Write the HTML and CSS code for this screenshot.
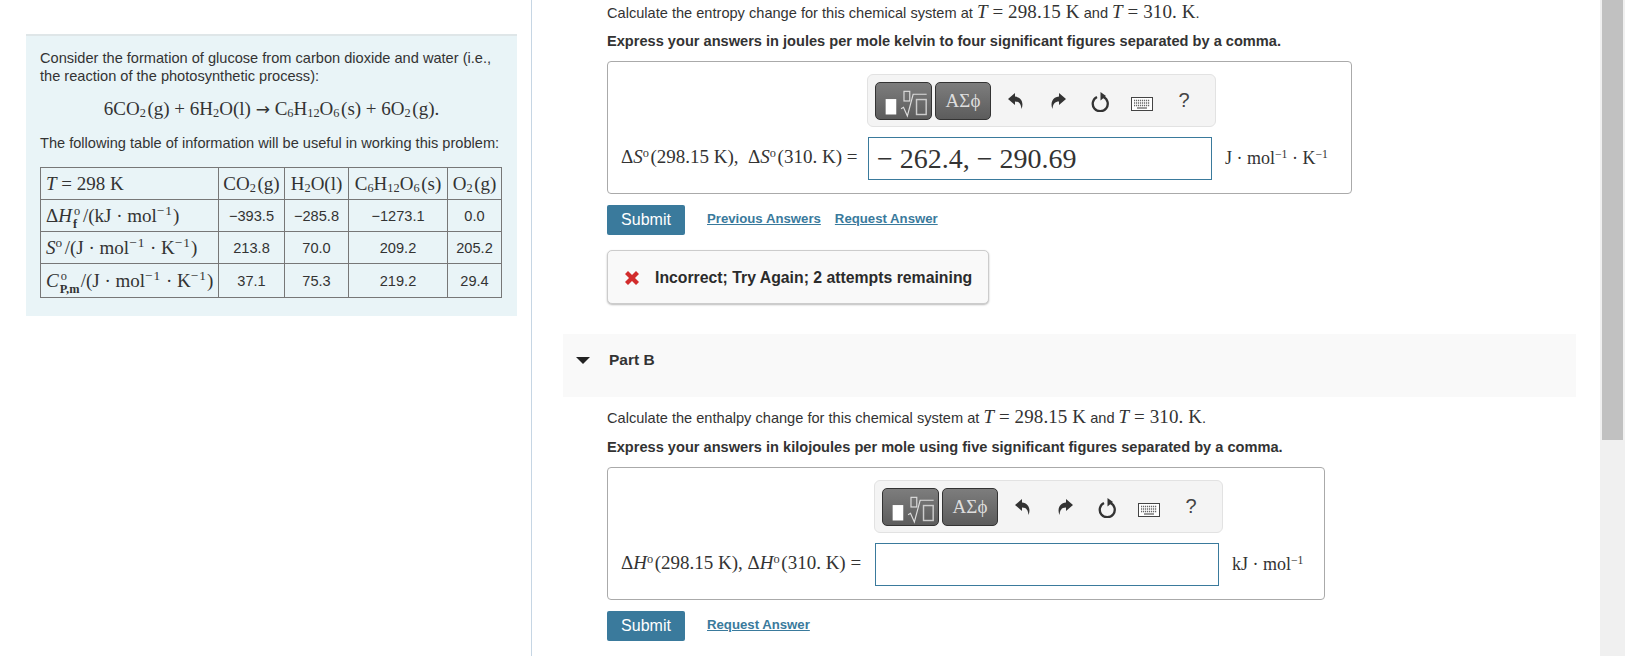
FILE: index.html
```html
<!DOCTYPE html>
<html lang="en">
<head>
  <meta charset="UTF-8">
  <title>Part B - Thermochemistry</title>
  <link rel="stylesheet" href="styles.css">
</head>
<body>

<svg class="defs" width="0" height="0">
  <symbol id="ic-templates" viewBox="0 0 57 37">
    <rect x="10" y="17" width="11" height="16" fill="#fff"/>
    <rect x="29" y="9" width="6" height="10" fill="none" stroke="#ddd" stroke-width="1.2"/>
    <path d="M26 27l2.500-1.500 4 9 6-22.500h14" fill="none" stroke="#ddd" stroke-width="1.200"/>
    <rect x="42" y="17.500" width="10" height="15.500" fill="none" stroke="#ccc" stroke-width="1.500"/>
  </symbol>
  <symbol id="ic-undo" viewBox="0 0 18 18">
    <path d="M8 1L1 7l7 6V9.500c4 0 6 2 6.500 7.500 2.500-6 0-12-6.500-12.500z" fill="#333"/>
  </symbol>
  <symbol id="ic-redo" viewBox="0 0 18 18">
    <path d="M10 1l7 6-7 6V9.500c-4 0-6 2-6.500 7.500-2.500-6 0-12 6.500-12.500z" fill="#333"/>
  </symbol>
  <symbol id="ic-reset" viewBox="0 0 18 20">
    <path d="M6 5a7.500 7.500 0 1 0 6.500 0" fill="none" stroke="#333" stroke-width="2.300"/>
    <path d="M9.500 0v8.500l5.500-4.500z" fill="#333"/>
  </symbol>
  <symbol id="ic-keyboard" viewBox="0 0 22 14">
    <rect x=".5" y=".5" width="21" height="13" fill="#fff" stroke="#444"/>
    <path d="M3 3.500h16M3 6h16M3 8.500h16" stroke="#666" stroke-width="1.300" stroke-dasharray="1.200 .8"/>
    <path d="M6 11h10" stroke="#666" stroke-width="1.300"/>
  </symbol>
  <symbol id="ic-cross" viewBox="0 0 16 16">
    <path d="M1 4l3-3 4 4 4-4 3 3-4 4 4 4-3 3-4-4-4 4-3-3 4-4z" fill="#d22c2c"/>
  </symbol>
</svg>

<div class="page">
  <aside class="side">
    <div class="info">
      <p>Consider the formation of glucose from carbon dioxide and water (i.e., the reaction of the photosynthetic process):</p>
      <div class="math equation">6CO<sub>2</sub>&#8202;(g) + 6H<sub>2</sub>O(l) <span class="arrow">→</span> C<sub>6</sub>H<sub>12</sub>O<sub>6</sub>&#8202;(s) + 6O<sub>2</sub>&#8202;(g).</div>
      <p>The following table of information will be useful in working this problem:</p>
      <table class="data">
        <tr class="row-head">
          <th class="col-label math"><i>T</i> = 298 K</th>
          <th class="col-a math">CO<sub>2</sub>&#8202;(g)</th>
          <th class="col-b math">H<sub>2</sub>O(l)</th>
          <th class="col-c math">C<sub>6</sub>H<sub>12</sub>O<sub>6</sub>&#8202;(s)</th>
          <th class="col-d math">O<sub>2</sub>&#8202;(g)</th>
        </tr>
        <tr>
          <th class="math">Δ<i>H</i><span class="stack"><sup>o</sup><sub>f</sub></span>/(kJ · mol<sup>−1</sup>)</th>
          <td>−393.5</td><td>−285.8</td><td>−1273.1</td><td>0.0</td>
        </tr>
        <tr>
          <th class="math"><i>S</i><sup>o</sup>&#8202;/(J · mol<sup>−1</sup> · K<sup>−1</sup>)</th>
          <td>213.8</td><td>70.0</td><td>209.2</td><td>205.2</td>
        </tr>
        <tr class="row-last">
          <th class="math"><i>C</i><span class="stack stack-wide"><sup>o</sup><sub>P,m</sub></span>/(J · mol<sup>−1</sup> · K<sup>−1</sup>)</th>
          <td>37.1</td><td>75.3</td><td>219.2</td><td>29.4</td>
        </tr>
      </table>
    </div>
  </aside>

  <main class="main">
    <div class="part">
      <p class="question">Calculate the entropy change for this chemical system at <span class="math"><i>T</i> = 298.15 K</span> and <span class="math"><i>T</i> = 310. K</span>.</p>
      <p class="instruction">Express your answers in joules per mole kelvin to four significant figures separated by a comma.</p>

      <div class="answer answer-a">
        <div class="toolbar">
          <button class="tool-btn tool-templates"><svg width="57" height="37"><use href="#ic-templates"/></svg></button>
          <button class="tool-btn tool-symbols">ΑΣϕ</button>
          <span class="tool-icon"><svg width="18" height="18"><use href="#ic-undo"/></svg></span>
          <span class="tool-icon"><svg width="18" height="18"><use href="#ic-redo"/></svg></span>
          <span class="tool-icon tool-reset"><svg width="18" height="20"><use href="#ic-reset"/></svg></span>
          <span class="tool-icon tool-keyboard"><svg width="22" height="14"><use href="#ic-keyboard"/></svg></span>
          <span class="tool-icon tool-help">?</span>
        </div>
        <label class="math answer-label">Δ<i>S</i><sup>o</sup>&#8202;(298.15 K), &nbsp;Δ<i>S</i><sup>o</sup>&#8202;(310. K) =</label>
        <input class="math answer-input" type="text" value="− 262.4, − 290.69">
        <span class="math units">J · mol<sup>−1</sup> · K<sup>−1</sup></span>
      </div>

      <div class="actions">
        <button class="submit">Submit</button>
        <a class="link" href="#">Previous Answers</a>
        <a class="link" href="#">Request Answer</a>
      </div>

      <div class="feedback">
        <svg width="16" height="16"><use href="#ic-cross"/></svg>
        <span>Incorrect; Try Again; 2 attempts remaining</span>
      </div>
    </div>

    <div class="part-head">
      <span class="caret"></span>
      <span>Part B</span>
    </div>

    <div class="part">
      <p class="question question-b">Calculate the enthalpy change for this chemical system at <span class="math"><i>T</i> = 298.15 K</span> and <span class="math"><i>T</i> = 310. K</span>.</p>
      <p class="instruction">Express your answers in kilojoules per mole using five significant figures separated by a comma.</p>

      <div class="answer answer-b">
        <div class="toolbar">
          <button class="tool-btn tool-templates"><svg width="57" height="37"><use href="#ic-templates"/></svg></button>
          <button class="tool-btn tool-symbols">ΑΣϕ</button>
          <span class="tool-icon"><svg width="18" height="18"><use href="#ic-undo"/></svg></span>
          <span class="tool-icon"><svg width="18" height="18"><use href="#ic-redo"/></svg></span>
          <span class="tool-icon tool-reset"><svg width="18" height="20"><use href="#ic-reset"/></svg></span>
          <span class="tool-icon tool-keyboard"><svg width="22" height="14"><use href="#ic-keyboard"/></svg></span>
          <span class="tool-icon tool-help">?</span>
        </div>
        <label class="math answer-label">Δ<i>H</i><sup>o</sup>&#8202;(298.15 K), Δ<i>H</i><sup>o</sup>&#8202;(310. K) =</label>
        <input class="math answer-input" type="text">
        <span class="math units">kJ · mol<sup>−1</sup></span>
      </div>

      <div class="actions">
        <button class="submit">Submit</button>
        <a class="link" href="#">Request Answer</a>
      </div>
    </div>
  </main>

  <div class="scrollbar"><div class="scrollbar-thumb"></div></div>
</div>

</body>
</html>
```

FILE: styles.css
```css
* {
  box-sizing: border-box;
}

html, body {
  margin: 0;
  height: 656px;
  overflow: hidden;
}

body {
  font-family: "Liberation Sans", Arial, sans-serif;
  font-size: 14px;
  color: #333;
  background: #fff;
}

.defs {
  position: absolute;
}

.page {
  display: flex;
  height: 656px;
}

.math {
  font-family: "Liberation Serif", "Times New Roman", serif;
}

sub, sup {
  font-size: 0.65em;
  line-height: 0;
}

sub {
  vertical-align: -0.2em;
}

sup {
  vertical-align: 0.5em;
}

/* left column */
.side {
  width: 532px;
  flex: none;
  padding: 34px 14px 0 26px;
  border-right: 1px solid #c6d6e4;
}

.info {
  background: #e9f4f7;
  border-top: 2px solid #dfe6e8;
  padding: 13px 14px 19px 14px;
  height: 282px;
}

.info p {
  margin: 0;
  line-height: 18px;
  font-size: 14.6px;
}

.equation {
  font-size: 19px;
  line-height: 24px;
  text-align: center;
  margin: 12px 0 13px;
  white-space: nowrap;
}

.arrow {
  font-family: "DejaVu Sans", sans-serif;
  font-size: 17px;
}

.data {
  border-collapse: collapse;
  margin-top: 15px;
  width: 461px;
  table-layout: fixed;
}

.data th, .data td {
  border: 1px solid #777;
  padding: 0;
  height: 32px;
  font-weight: normal;
  white-space: nowrap;
}

.data th {
  text-align: left;
  padding-left: 5px;
  font-size: 19px;
}

.data td {
  text-align: center;
  font-size: 14.6px;
}

.data th sup {
  font-size: 0.7em;
  letter-spacing: 1px;
}

.data .row-head th + th {
  text-align: center;
  padding-left: 0;
}

.data .row-last th, .data .row-last td {
  height: 34px;
}

.col-label { width: 178px; }
.col-a { width: 66px; }
.col-b { width: 64px; }
.col-c { width: 99px; }
.col-d { width: 54px; }

.stack {
  display: inline-block;
  position: relative;
  width: 11px;
  height: 0;
}

.stack-wide {
  width: 22px;
}

.data .stack sup {
  position: absolute;
  left: 2px;
  top: -17px;
  line-height: 1;
  font-size: 0.65em;
  vertical-align: baseline;
}

.stack sub {
  position: absolute;
  left: 1px;
  top: -4px;
  line-height: 1;
  font-weight: bold;
  vertical-align: baseline;
}

/* right column */
.main {
  flex: 1;
  min-width: 0;
  padding: 0 24px 0 31px;
  overflow: hidden;
}

.part {
  padding-left: 44px;
}

.question {
  margin: 0;
  font-size: 14.6px;
  line-height: 24px;
}

.question .math {
  font-size: 19px;
  letter-spacing: 0.1px;
}

.question-b {
  margin-top: 8px;
}

.instruction {
  margin: 7px 0 0;
  font-size: 14.6px;
  font-weight: bold;
  line-height: 18px;
}

.question-b + .instruction {
  margin-top: 8px;
}

.answer {
  display: grid;
  align-items: center;
  margin-top: 11px;
  padding: 12px 0 13px 13px;
  border: 1px solid #aaa;
  border-radius: 4px;
  row-gap: 10px;
}

.answer-a {
  width: 745px;
  grid-template-columns: 247px 344px 1fr;
}

.answer-b {
  width: 718px;
  grid-template-columns: 254px 344px 1fr;
}

.answer-label {
  grid-column: 1;
  grid-row: 2;
  padding-bottom: 3px;
  font-size: 19px;
  white-space: nowrap;
}

.answer-input {
  grid-column: 2;
  grid-row: 2;
  width: 344px;
  height: 43px;
  border: 1px solid #3a7a9c;
  padding: 0 8px;
  font-size: 28px;
  color: #333;
  outline: none;
}

.units {
  grid-column: 3;
  grid-row: 2;
  margin-left: 13px;
  font-size: 18px;
  white-space: nowrap;
}

.toolbar {
  grid-column: 2 / 4;
  grid-row: 1;
  display: flex;
  align-items: center;
  width: 349px;
  height: 53px;
  margin-left: -1px;
  padding-left: 7px;
  background: #f4f4f4;
  border: 1px solid #e2e2e2;
  border-radius: 6px;
}

.tool-btn {
  display: flex;
  align-items: center;
  justify-content: center;
  height: 38px;
  padding: 0;
  border: 1px solid #333;
  border-radius: 5px;
  background: linear-gradient(#7d7d7d, #5c5c5c);
  color: #ddd;
}

.tool-templates {
  width: 57px;
}

.tool-symbols {
  width: 56px;
  margin-left: 3px;
  font-family: "Liberation Serif", serif;
  font-size: 19px;
}

.tool-icon {
  display: flex;
  align-items: center;
  justify-content: center;
  width: 42px;
  height: 24px;
}

.tool-symbols + .tool-icon {
  margin-left: 4px;
}

.tool-reset {
  margin-top: 3px;
}

.tool-keyboard {
  margin-top: 7px;
}

.tool-help {
  font-size: 20px;
  color: #444;
}

.actions {
  display: flex;
  align-items: center;
  margin-top: 11px;
}

.submit {
  width: 78px;
  height: 30px;
  margin-right: 22px;
  border: none;
  border-radius: 2px;
  background: #3a7a9c;
  color: #fff;
  font-family: inherit;
  font-size: 16px;
}

.link {
  margin-right: 14px;
  margin-bottom: 3px;
  font-size: 13.2px;
  font-weight: bold;
  color: #3a7a9c;
}

.feedback {
  display: inline-flex;
  align-items: center;
  gap: 15px;
  width: 382px;
  height: 54px;
  margin-top: 15px;
  padding: 2px 0 0 16px;
  background: #f9f9f9;
  border: 1px solid #ccc;
  border-radius: 5px;
  box-shadow: 0 1px 2px #bbb;
  font-size: 15.8px;
  font-weight: bold;
  color: #2b2b2b;
  vertical-align: top;
}

.part-head {
  display: flex;
  gap: 19px;
  height: 63px;
  margin-top: 30px;
  padding: 17px 0 0 13px;
  background: #f9f9f9;
  font-size: 15.5px;
  font-weight: bold;
  line-height: 18px;
}

.caret {
  width: 0;
  height: 0;
  margin-top: 6px;
  border-left: 7px solid transparent;
  border-right: 7px solid transparent;
  border-top: 7px solid #222;
}

/* fake page scrollbar */
.scrollbar {
  width: 25px;
  flex: none;
  padding: 0 2px;
  background: #f0f0f0;
}

.scrollbar-thumb {
  height: 440px;
  background: #c1c1c1;
}
```
